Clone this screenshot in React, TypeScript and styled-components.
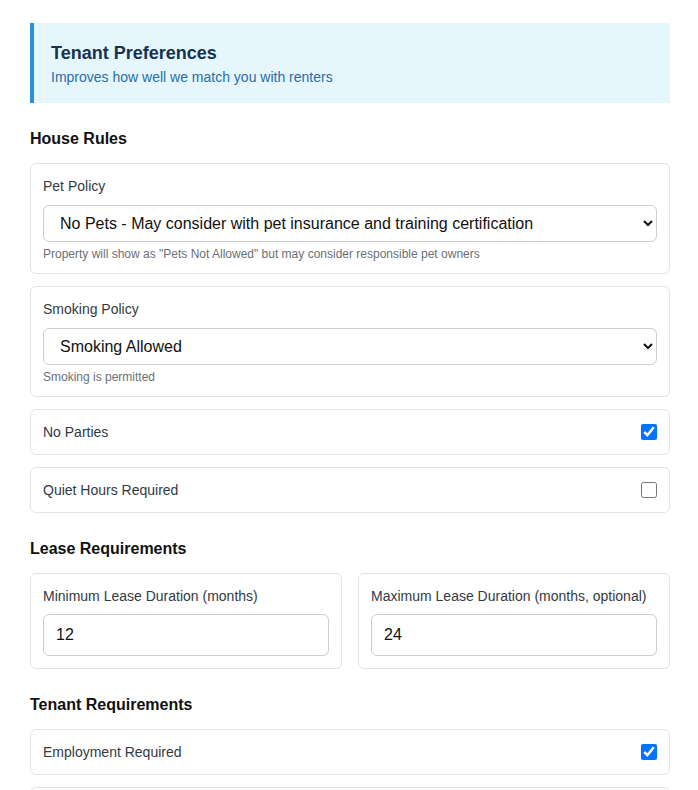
import { createGlobalStyle, styled } from "styled-components";
import { useState } from "react";

const GlobalStyle = createGlobalStyle`
  body {
    margin: 0;
    background: #ffffff;
    font-family: "Liberation Sans", Arial, sans-serif;
  }
`;

const Page = styled.div`
  padding: 23px 28px 0 30px;
`;

const Banner = styled.div`
  background: #e5f6fd;
  border-left: 4px solid #2b90d9;
  padding: 20px 17px 18px;
`;

const BannerTitle = styled.h2`
  margin: 0 0 5px;
  font-size: 18px;
  line-height: 21px;
  font-weight: 700;
  color: #17324f;
`;

const BannerText = styled.p`
  margin: 0;
  font-size: 14px;
  line-height: 16px;
  color: #2a6ea6;
`;

const SectionTitle = styled.h3`
  margin: 27px 0 15px;
  font-size: 16px;
  line-height: 18px;
  font-weight: 700;
  color: #111;
`;

const Stack = styled.div`
  display: flex;
  flex-direction: column;
  gap: 12px;
`;

const Grid = styled.div`
  display: grid;
  grid-template-columns: 1fr 1fr;
  gap: 16px;
`;

const Card = styled.div`
  border: 1px solid #e3e4e6;
  border-radius: 6px;
  padding: 14px 12px 12px;
  background: #fff;
`;

const Label = styled.label<{ $gap?: number }>`
  display: block;
  font-size: 14px;
  line-height: 17px;
  color: #333a44;
  margin-bottom: ${(p) => p.$gap ?? 10}px;
`;

const Select = styled.select`
  display: block;
  width: 100%;
  box-sizing: border-box;
  padding: 8px 12px;
  font-size: 16px;
  font-family: "Liberation Sans", Arial, sans-serif;
  color: #111;
  background: #fff;
  border: 1px solid #ccd0d6;
  border-radius: 6px;
`;

const Input = styled.input`
  display: block;
  width: 100%;
  box-sizing: border-box;
  padding: 11px 12px;
  font-size: 16px;
  line-height: 18px;
  font-family: "Liberation Sans", Arial, sans-serif;
  color: #111;
  border: 1px solid #ccd0d6;
  border-radius: 6px;
`;

const Help = styled.div`
  margin-top: 5px;
  font-size: 12px;
  line-height: 14px;
  color: #6b6f75;
`;

const ToggleRow = styled.label`
  display: flex;
  align-items: center;
  justify-content: space-between;
  border: 1px solid #e3e4e6;
  border-radius: 6px;
  padding: 14px 12px;
  font-size: 14px;
  line-height: 16px;
  color: #333a44;
`;

const Check = styled.input`
  width: 16px;
  height: 16px;
  margin: 0;
  accent-color: #0075ff;
`;

const petHelp: Record<string, string> = {
  considered:
    'Property will show as "Pets Not Allowed" but may consider responsible pet owners',
  none: "No pets are allowed",
  allowed: "Pets are welcome",
};

const smokingHelp: Record<string, string> = {
  allowed: "Smoking is permitted",
  none: "No smoking on the property",
  outside: "Smoking permitted outside only",
};

function Toggle({ label, initial }: { label: string; initial: boolean }) {
  const [on, setOn] = useState(initial);
  return (
    <ToggleRow>
      <span>{label}</span>
      <Check type="checkbox" checked={on} onChange={() => setOn(!on)} />
    </ToggleRow>
  );
}

export default function App() {
  const [pet, setPet] = useState("considered");
  const [smoking, setSmoking] = useState("allowed");
  const [minLease, setMinLease] = useState("12");
  const [maxLease, setMaxLease] = useState("24");

  return (
    <>
      <GlobalStyle />
      <Page>
        <Banner>
          <BannerTitle>Tenant Preferences</BannerTitle>
          <BannerText>Improves how well we match you with renters</BannerText>
        </Banner>

        <SectionTitle>House Rules</SectionTitle>
        <Stack>
          <Card>
            <Label>Pet Policy</Label>
            <Select value={pet} onChange={(e) => setPet(e.target.value)}>
              <option value="considered">
                No Pets - May consider with pet insurance and training certification
              </option>
              <option value="none">No Pets</option>
              <option value="allowed">Pets Allowed</option>
            </Select>
            <Help>{petHelp[pet]}</Help>
          </Card>
          <Card>
            <Label>Smoking Policy</Label>
            <Select value={smoking} onChange={(e) => setSmoking(e.target.value)}>
              <option value="allowed">Smoking Allowed</option>
              <option value="none">No Smoking</option>
              <option value="outside">Outside Only</option>
            </Select>
            <Help>{smokingHelp[smoking]}</Help>
          </Card>
          <Toggle label="No Parties" initial={true} />
          <Toggle label="Quiet Hours Required" initial={false} />
        </Stack>

        <SectionTitle>Lease Requirements</SectionTitle>
        <Grid>
          <Card>
            <Label $gap={9}>Minimum Lease Duration (months)</Label>
            <Input
              type="text"
              value={minLease}
              onChange={(e) => setMinLease(e.target.value)}
            />
          </Card>
          <Card>
            <Label $gap={9}>Maximum Lease Duration (months, optional)</Label>
            <Input
              type="text"
              value={maxLease}
              onChange={(e) => setMaxLease(e.target.value)}
            />
          </Card>
        </Grid>

        <SectionTitle>Tenant Requirements</SectionTitle>
        <Stack>
          <Toggle label="Employment Required" initial={true} />
          <Toggle label="Background Check Required" initial={true} />
          <Toggle label="Credit Check Required" initial={false} />
        </Stack>
      </Page>
    </>
  );
}
